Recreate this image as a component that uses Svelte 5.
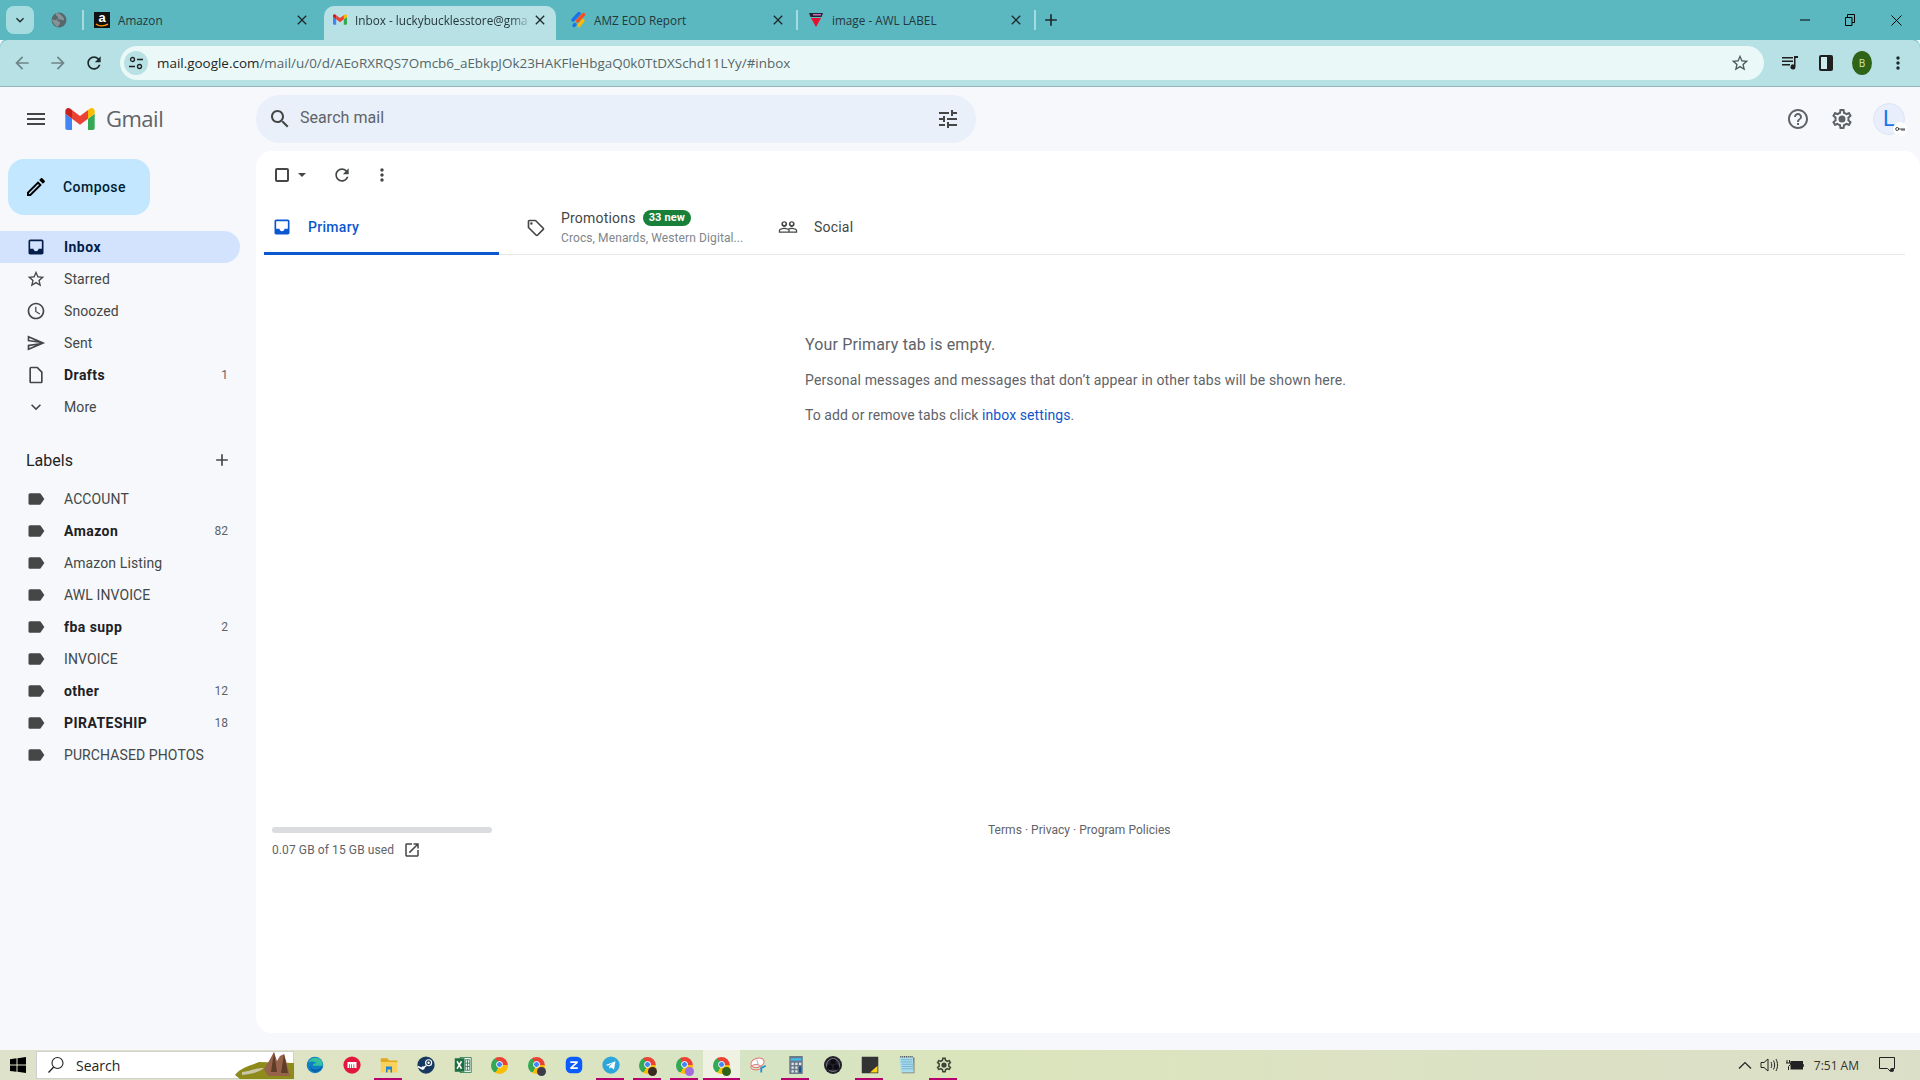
<script>
  const P = {
    inbox: 'M19 3H5c-1.1 0-2 .9-2 2v14c0 1.1.9 2 2 2h14c1.1 0 2-.9 2-2V5c0-1.1-.9-2-2-2zM5 5h14v9h-4c0 1.66-1.34 3-3 3s-3-1.34-3-3H5z',
    star: 'M22 9.24l-7.19-.62L12 2 9.19 8.63 2 9.24l5.46 4.73L5.82 21 12 17.27 18.18 21l-1.63-7.03L22 9.24zM12 15.4l-3.76 2.27 1-4.28-3.32-2.88 4.38-.38L12 6.1l1.71 4.04 4.38.38-3.32 2.88 1 4.28L12 15.4z',
    clock: 'M11.99 2C6.47 2 2 6.48 2 12s4.47 10 9.99 10C17.52 22 22 17.52 22 12S17.52 2 11.99 2zM12 20c-4.42 0-8-3.58-8-8s3.58-8 8-8 8 3.58 8 8-3.58 8-8 8zm.5-13H11v6l5.25 3.15.75-1.23-4.5-2.67z',
    send: 'M4.01 6.03l7.51 3.22-7.52-1 .01-2.22m7.5 8.72L4 17.97v-2.22l7.51-1M2.01 3L2 10l15 2-15 2 .01 7L23 12 2.01 3z',
    draft: 'M14 2H6c-1.1 0-2 .9-2 2v16c0 1.1.9 2 2 2h12c1.1 0 2-.9 2-2V8l-6-6zM6 20V4h7l5 5v11H6z',
    chevron: 'M7.41 8.59L12 13.17l4.59-4.58L18 10l-6 6-6-6z',
    label: 'M17.63 5.84C17.27 5.33 16.67 5 16 5L5 5.01C3.9 5.01 3 5.9 3 7v10c0 1.1.9 1.99 2 1.99L16 19c.67 0 1.27-.33 1.63-.84L22 12l-4.37-6.16z',
    pencil: 'M3 17.25V21h3.75L17.81 9.94l-3.75-3.75L3 17.25zM5.92 19H5v-.92l9.06-9.06.92.92L5.92 19zM20.71 5.63l-2.34-2.34c-.2-.2-.45-.29-.71-.29s-.51.1-.7.29l-1.83 1.83 3.75 3.75 1.83-1.83c.39-.39.39-1.02 0-1.41z',
    search: 'M15.5 14h-.79l-.28-.27C15.41 12.59 16 11.11 16 9.5 16 5.91 13.09 3 9.5 3S3 5.91 3 9.5 5.91 16 9.5 16c1.61 0 3.09-.59 4.23-1.57l.27.28v.79l5 4.99L20.49 19l-4.99-5zm-6 0C7.01 14 5 11.99 5 9.5S7.01 5 9.5 5 14 7.01 14 9.5 11.99 14 9.5 14z',
    tune: 'M3 17v2h6v-2H3zM3 5v2h10V5H3zm10 16v-2h8v-2h-8v-2h-2v6h2zM7 9v2H3v2h4v2h2V9H7zm14 4v-2H11v2h10zm-6-4h2V7h4V5h-4V3h-2v6z',
    help: 'M11 18h2v-2h-2v2zm1-16C6.48 2 2 6.48 2 12s4.48 10 10 10 10-4.48 10-10S17.52 2 12 2zm0 18c-4.41 0-8-3.59-8-8s3.59-8 8-8 8 3.59 8 8-3.59 8-8 8zm0-14c-2.21 0-4 1.79-4 4h2c0-1.1.9-2 2-2s2 .9 2 2c0 2-3 1.75-3 5h2c0-2.25 3-2.5 3-5 0-2.21-1.79-4-4-4z',
    gear: 'M19.43 12.98c.04-.32.07-.64.07-.98 0-.34-.03-.66-.07-.98l2.11-1.65c.19-.15.24-.42.12-.64l-2-3.46c-.09-.16-.26-.25-.44-.25-.06 0-.12.01-.17.03l-2.49 1c-.52-.4-1.08-.73-1.69-.98l-.38-2.65C14.46 2.18 14.25 2 14 2h-4c-.25 0-.46.18-.49.42l-.38 2.65c-.61.25-1.17.59-1.69.98l-2.49-1c-.06-.02-.12-.03-.18-.03-.17 0-.34.09-.43.25l-2 3.46c-.13.22-.07.49.12.64l2.11 1.65c-.04.32-.07.65-.07.98 0 .33.03.66.07.98l-2.11 1.65c-.19.15-.24.42-.12.64l2 3.46c.09.16.26.25.44.25.06 0 .12-.01.17-.03l2.49-1c.52.4 1.08.73 1.69.98l.38 2.65c.03.24.24.42.49.42h4c.25 0 .46-.18.49-.42l.38-2.65c.61-.25 1.17-.59 1.69-.98l2.49 1c.06.02.12.03.18.03.17 0 .34-.09.43-.25l2-3.46c.12-.22.07-.49-.12-.64l-2.11-1.65zm-1.98-1.71c.04.31.05.52.05.73 0 .21-.02.43-.05.73l-.14 1.13.89.7 1.08.84-.7 1.21-1.27-.51-1.04-.42-.9.68c-.43.32-.84.56-1.25.73l-1.06.43-.16 1.13-.2 1.35h-1.4l-.19-1.35-.16-1.13-1.06-.43c-.43-.18-.83-.41-1.23-.71l-.91-.7-1.06.43-1.27.51-.7-1.21 1.08-.84.89-.7-.14-1.13c-.03-.31-.05-.54-.05-.74s.02-.43.05-.73l.14-1.13-.89-.7-1.08-.84.7-1.21 1.27.51 1.04.42.9-.68c.43-.32.84-.56 1.25-.73l1.06-.43.16-1.13.2-1.35h1.39l.19 1.35.16 1.13 1.06.43c.43.18.83.41 1.23.71l.91.7 1.06-.43 1.27-.51.7 1.21-1.07.85-.89.7.14 1.13zM12 8.500a3.500 3.500 0 1 0 0 7 3.500 3.500 0 1 0 0-7z',
    refresh: 'M17.65 6.35C16.2 4.9 14.21 4 12 4c-4.42 0-7.99 3.58-7.99 8s3.57 8 7.99 8c3.73 0 6.84-2.55 7.73-6h-2.08c-.82 2.33-3.04 4-5.65 4-3.31 0-6-2.69-6-6s2.69-6 6-6c1.66 0 3.14.69 4.22 1.78L13 11h7V4l-2.35 2.35z',
    dots: 'M12 8c1.1 0 2-.9 2-2s-.9-2-2-2-2 .9-2 2 .9 2 2 2zm0 2c-1.1 0-2 .9-2 2s.9 2 2 2 2-.9 2-2-.9-2-2-2zm0 6c-1.1 0-2 .9-2 2s.9 2 2 2 2-.9 2-2-.9-2-2-2z',
    tag: 'M21.41 11.58l-9-9C12.05 2.22 11.55 2 11 2H4c-1.1 0-2 .9-2 2v7c0 .55.22 1.05.59 1.42l9 9c.36.36.86.58 1.41.58s1.05-.22 1.41-.59l7-7c.37-.36.59-.86.59-1.41s-.23-1.06-.59-1.42zM13 20.01L4 11V4h7v-.01l9 9-7 7.02zM6.5 5A1.5 1.5 0 1 0 6.5 8 1.5 1.5 0 1 0 6.5 5z',
    people: 'M16.5 13c-1.2 0-3.07.34-4.5 1-1.43-.67-3.3-1-4.5-1C5.33 13 1 14.08 1 16.25V19h22v-2.75c0-2.17-4.33-3.25-6.5-3.25zm-4 4.5h-10v-1.25c0-.54 2.56-1.75 5-1.75s5 1.21 5 1.75v1.25zm9 0H14v-1.25c0-.46-.2-.86-.52-1.22.88-.3 1.96-.53 3.02-.53 2.44 0 5 1.21 5 1.75v1.25zM7.5 12c1.93 0 3.5-1.57 3.5-3.5S9.43 5 7.5 5 4 6.57 4 8.5 5.57 12 7.5 12zm0-5.5c.83 0 1.5.67 1.5 1.5s-.67 1.5-1.5 1.5S6 8.83 6 8s.67-1.5 1.5-1.5zm9 5.5c1.93 0 3.5-1.57 3.5-3.5S18.43 5 16.5 5 13 6.57 13 8.5s1.57 3.5 3.5 3.5zm0-5.5c.83 0 1.5.67 1.5 1.5s-.67 1.5-1.5 1.5S15 8.83 15 8s.67-1.5 1.5-1.5z',
    open: 'M19 19H5V5h7V3H5c-1.11 0-2 .9-2 2v14c0 1.1.89 2 2 2h14c1.1 0 2-.9 2-2v-7h-2v7zM14 3v2h3.59l-9.83 9.83 1.41 1.41L19 6.41V10h2V3h-7z',
    back: 'M20 11H7.83l5.59-5.59L12 4l-8 8 8 8 1.41-1.41L7.83 13H20v-2z',
    forward: 'M12 4l-1.41 1.41L16.17 11H4v2h12.17l-5.58 5.59L12 20l8-8z',
    plus: 'M19 13h-6v6h-2v-6H5v-2h6V5h2v6h6v2z',
    menu: 'M3 18h18v-2H3v2zm0-5h18v-2H3v2zm0-7v2h18V6H3z',
    close: 'M19 6.41L17.59 5 12 10.59 6.41 5 5 6.41 10.59 12 5 17.59 6.41 19 12 13.41 17.59 19 19 17.59 13.41 12z'
  };

  const nav = [
    { name: 'Inbox', icon: P.inbox, active: true },
    { name: 'Starred', icon: P.star },
    { name: 'Snoozed', icon: P.clock },
    { name: 'Sent', icon: P.send },
    { name: 'Drafts', icon: P.draft, count: 1, bold: true },
    { name: 'More', icon: P.chevron }
  ];

  const labels = [
    { name: 'ACCOUNT' },
    { name: 'Amazon', count: 82, bold: true },
    { name: 'Amazon Listing' },
    { name: 'AWL INVOICE' },
    { name: 'fba supp', count: 2, bold: true },
    { name: 'INVOICE' },
    { name: 'other', count: 12, bold: true },
    { name: 'PIRATESHIP', count: 18, bold: true },
    { name: 'PURCHASED PHOTOS' }
  ];

  const tabs = [
    { title: 'Amazon', fav: 'amazon' },
    { title: 'Inbox - luckybucklesstore@gma', fav: 'gmail', active: true },
    { title: 'AMZ EOD Report', fav: 'amz' },
    { title: 'image - AWL LABEL', fav: 'awl' }
  ];

  // taskbar order, run = underlined
  const apps = [
    { id: 'edge' }, { id: 'red' }, { id: 'folder', run: true }, { id: 'steam' }, { id: 'excel' },
    { id: 'chrome' }, { id: 'chrome', badge: 'b1' }, { id: 'zoom' },
    { id: 'telegram', run: true }, { id: 'chrome', badge: 'b2', run: true },
    { id: 'chrome', badge: 'b3', run: true }, { id: 'chrome', badge: 'b4', run: true, active: true },
    { id: 'snip' }, { id: 'calc', run: true }, { id: 'obs' }, { id: 'sticky', run: true },
    { id: 'notepad' }, { id: 'gear', run: true }
  ];
</script>

{#snippet icon(d, size, cls = '')}
  <svg class="ic {cls}" width={size} height={size} viewBox="0 0 24 24"><path d={d} fill-rule="evenodd" /></svg>
{/snippet}

{#snippet gmailLogo(w, h)}
  <svg width={w} height={h} viewBox="52 42 88 66">
    <path fill="#4285f4" d="M58 108h14V74L52 59v43c0 3.32 2.69 6 6 6" />
    <path fill="#34a853" d="M120 108h14c3.32 0 6-2.69 6-6V59l-20 15" />
    <path fill="#fbbc04" d="M120 48v26l20-15v-8c0-7.42-8.47-11.65-14.4-7.2" />
    <path fill="#ea4335" d="M72 74V48l24 18 24-18v26L96 92" />
    <path fill="#c5221f" d="M52 51v8l20 15V48l-5.6-4.2c-5.94-4.45-14.4-.22-14.4 7.2" />
  </svg>
{/snippet}

{#snippet favicon(kind)}
  {#if kind === 'amazon'}
    <span class="fav-amazon">a<svg width="14" height="5" viewBox="0 0 14 5"><path d="M1 1c3 2.4 8 2.4 12 .2" fill="none" stroke="#f90" stroke-width="1.5" /></svg></span>
  {:else if kind === 'gmail'}
    <span class="fav">{@render gmailLogo(14, 11)}</span>
  {:else if kind === 'amz'}
    <svg class="fav" width="16" height="16" viewBox="0 0 16 16">
      <path d="M9 1.5L3 8" stroke="#1a73e8" stroke-width="3.4" stroke-linecap="round" />
      <path d="M13.5 2.5L7.5 9" stroke="#f4511e" stroke-width="3.4" stroke-linecap="round" />
      <path d="M13 8.5l-4 5" stroke="#fbbc04" stroke-width="3.4" stroke-linecap="round" />
      <path d="M5 12.5l-1 1" stroke="#1a73e8" stroke-width="3.4" stroke-linecap="round" />
    </svg>
  {:else}
    <svg class="fav" width="16" height="16" viewBox="0 0 16 16">
      <path d="M1 1h14l-1.5 4h-11z" fill="#2a2130" />
      <path d="M5 2h8v1.5H5z" fill="#c46fc4" />
      <path d="M3 6h10l-5 9z" fill="#e8112d" />
    </svg>
  {/if}
{/snippet}

{#snippet app(a)}
  {#if a.id === 'chrome'}
    <span class="chrome"><span class="chrome-dot"></span>{#if a.badge}<span class="badge-dot {a.badge}"></span>{/if}</span>
  {:else if a.id === 'edge'}
    <svg width="24" height="24" viewBox="0 0 24 24">
      <circle cx="12" cy="12" r="11" fill="#0f7fc4" />
      <path d="M3 9c2-6 9-8 14-6 4 2 6 6 5 10H9c0-3 3-4 5-3-1-3-7-4-11-1z" fill="#35c1a0" />
      <path d="M22 13c-1 6-7 9-11 8-4-1-6-5-5-8 0 3 4 6 8 5 3 0 6-2 8-5z" fill="#0a5fa8" />
    </svg>
  {:else if a.id === 'red'}
    <svg width="24" height="24" viewBox="0 0 24 24">
      <circle cx="12" cy="12" r="11.500" fill="#e3173e" />
      <path d="M6 8h12v8h-3v-5h-1v5h-2v-5h-1v5H9v-5H8v5H6z" fill="#fff" />
    </svg>
  {:else if a.id === 'folder'}
    <svg width="24" height="24" viewBox="0 0 24 24">
      <path d="M1 3h9l2 3h11v3H1z" fill="#e2a91f" />
      <path d="M1 8h22v14H1z" fill="#f9d25e" />
      <path d="M8 14h8v8h-2v-4h-4v4H8z" fill="#1f86d6" />
    </svg>
  {:else if a.id === 'steam'}
    <svg width="24" height="24" viewBox="0 0 24 24">
      <circle cx="12" cy="12" r="11.500" fill="#16395f" />
      <circle cx="15.5" cy="9" r="4" fill="none" stroke="#fff" stroke-width="1.6" />
      <circle cx="15.5" cy="9" r="1.6" fill="#fff" />
      <path d="M1 14l6 3 5-4" fill="none" stroke="#fff" stroke-width="2" />
      <circle cx="8" cy="16" r="2.2" fill="#fff" />
    </svg>
  {:else if a.id === 'excel'}
    <svg width="24" height="24" viewBox="0 0 24 24">
      <path d="M8 2h15v20H8z" fill="#e9f3ec" stroke="#1d6f42" />
      <path d="M15 5h6v14h-6z" fill="none" stroke="#1d6f42" />
      <path d="M15 9.5h6M15 14h6M18 5v14" stroke="#1d6f42" />
      <path d="M1 3h13v18H1z" fill="#1d6f42" />
      <path d="M4 7l6 10M10 7l-6 10" stroke="#fff" stroke-width="2" />
    </svg>
  {:else if a.id === 'zoom'}
    <svg width="24" height="24" viewBox="0 0 24 24">
      <rect x="1" y="1" width="22" height="22" rx="7" fill="#0b5cff" />
      <path d="M7 7h10v2.2L10.5 15H17v2.4H7v-2.2L13.5 9.4H7z" fill="#fff" />
    </svg>
  {:else if a.id === 'telegram'}
    <svg width="24" height="24" viewBox="0 0 24 24">
      <circle cx="12" cy="12" r="11.500" fill="#2ea6da" />
      <path d="M5 12l13-5-2 11-4-3-2 2-.5-3.500 5.500-5-7 4.500z" fill="#fff" />
    </svg>
  {:else if a.id === 'snip'}
    <svg width="24" height="24" viewBox="0 0 24 24">
      <ellipse cx="10" cy="9" rx="9" ry="6" transform="rotate(-18 10 9)" fill="#fff" stroke="#e5726f" stroke-width="1.3" />
      <ellipse cx="8" cy="15" rx="7" ry="3.5" fill="none" stroke="#e5726f" stroke-width="1.3" />
      <path d="M9 5l2 6M6 12l5-1" stroke="#999" />
      <path d="M15 22v-6l6-3" fill="none" stroke="#1a93d8" stroke-width="2.4" />
    </svg>
  {:else if a.id === 'calc'}
    <svg width="24" height="24" viewBox="0 0 24 24">
      <path d="M3 0h18v24H3z" fill="#6b7a8a" />
      <path d="M5 3h14v3H5z" fill="#3ec1f0" />
      <path d="M6 9h3v3H6zM11 9h3v3h-3zM16 9h3v3h-3zM6 14h3v3H6zM11 14h3v3h-3zM6 19h3v3H6zM11 19h3v3h-3z" fill="#e3e7ec" />
      <path d="M16 14h3v8h-3z" fill="#12558f" />
    </svg>
  {:else if a.id === 'obs'}
    <svg width="24" height="24" viewBox="0 0 24 24">
      <circle cx="12" cy="12" r="12" fill="#23212a" />
      <circle cx="12" cy="12" r="8.500" fill="none" stroke="#8b8994" stroke-width="1.200" />
      <circle cx="12" cy="7.500" r="3.600" fill="#0d0c12" />
      <circle cx="7.500" cy="15" r="3.600" fill="#0d0c12" />
      <circle cx="16.500" cy="15" r="3.600" fill="#0d0c12" />
    </svg>
  {:else if a.id === 'sticky'}
    <svg width="24" height="24" viewBox="0 0 24 24">
      <path d="M1 1h22v22H1z" fill="#333" />
      <path d="M22 13v9H12z" fill="#fcd116" />
    </svg>
  {:else if a.id === 'notepad'}
    <svg width="24" height="24" viewBox="0 0 24 24">
      <path d="M5 2h17v21H5z" fill="#7e7a6c" />
      <path d="M2 1h18l1 21H4z" fill="#a9dcef" />
      <path d="M4 5h15M4 8h15M5 11h15M5 14h15M5 17h15" stroke="#6aa7c0" />
      <path d="M3 1h17" stroke="#555" stroke-width="2" stroke-dasharray="1.500 1" />
    </svg>
  {:else}
    {@render icon(P.gear, 24, 'tb-gear')}
  {/if}
{/snippet}

<div class="screen">
  <div class="tabstrip">
    <span class="tabsearch">{@render icon(P.chevron, 16, 'dark')}</span>
    <span class="pinned">
      <svg width="18" height="18" viewBox="0 0 18 18">
        <circle cx="9" cy="9" r="7.500" fill="#58676c" />
        <path d="M6 2c-1 2 1 3 2 4s-1 3-3 3-3-1-3-1c0 3 3 7 6 8 0-2 2-2 2-4s-3-2-3-3 3-1 5 0 2 0 2-1-3-6-8-6z" fill="#859398" />
      </svg>
    </span>
    {#each tabs as t, i}
      <div class="tab" class:active={t.active} class:sep={i !== 2 && !t.active}>
        {@render favicon(t.fav)}
        <span class="tab-title">{t.title}</span>
        {@render icon(P.close, 16, 'dark')}
      </div>
    {/each}
    <span class="newtab">{@render icon(P.plus, 20, 'dark')}</span>
    <div class="winctl">
      <svg width="10" height="10" viewBox="0 0 10 10"><path d="M0 5h10" stroke="#000" /></svg>
      <svg width="10" height="12" viewBox="0 0 10 12"><path d="M.5 3.500h6.500v8H.5zM2.500 3.500V.5h7v8H7" fill="none" stroke="#000" /></svg>
      <svg width="11" height="11" viewBox="0 0 11 11"><path d="M.5.5l10 10M10.500.5l-10 10" stroke="#000" /></svg>
    </div>
  </div>

  <div class="toolbar">
    <span class="tbtn">{@render icon(P.back, 20, 'muted')}</span>
    <span class="tbtn">{@render icon(P.forward, 20, 'muted')}</span>
    <span class="tbtn">{@render icon(P.refresh, 20, 'dark')}</span>
    <div class="omnibox">
      <span class="siteinfo">
        <svg width="16" height="16" viewBox="0 0 16 16">
          <circle cx="4.500" cy="4.500" r="2" fill="none" stroke="#1f1f1f" stroke-width="1.300" />
          <path d="M9 4.500h6M1 11.500h6" stroke="#1f1f1f" stroke-width="1.300" />
          <circle cx="11.500" cy="11.500" r="2" fill="none" stroke="#1f1f1f" stroke-width="1.300" />
        </svg>
      </span>
      <span class="url"><b>mail.google.com</b>/mail/u/0/d/AEoRXRQS7Omcb6_aEbkpJOk23HAKFleHbgaQ0k0TtDXSchd11LYy/#inbox</span>
      {@render icon(P.star, 20, 'greyed')}
    </div>
    <div class="tools">
      <svg width="20" height="20" viewBox="0 0 20 20"><path d="M2 4h11v1.500H2zM2 7.500h11V9H2zM2 11h8v1.500H2z" fill="#1f1f1f" /><path d="M14 3h4v2h-2.500v9a2.500 2.500 0 1 1-1.500-2.300z" fill="#1f1f1f" /></svg>
      <svg width="20" height="20" viewBox="0 0 20 20"><rect x="3" y="2" width="14" height="16" rx="2" fill="#1f1f1f" /><rect x="5" y="4" width="6" height="12" fill="#cfeaed" /></svg>
      <span class="browser-avatar">B</span>
      {@render icon(P.dots, 20, 'dark')}
    </div>
  </div>

  <div class="gmail">
    <header class="gm-head">
      <div class="brand">
        {@render icon(P.menu, 24, 'grey')}
        <span class="logo">{@render gmailLogo(30, 22)}</span>
        <span class="wordmark">Gmail</span>
      </div>
      <div class="searchbar">
        {@render icon(P.search, 24, 'grey')}
        <span class="ph">Search mail</span>
        {@render icon(P.tune, 24, 'grey')}
      </div>
      <div class="head-right">
        {@render icon(P.help, 24, 'soft')}
        {@render icon(P.gear, 24, 'soft')}
        <span class="avatar">L<span class="key">
          <svg width="10" height="6" viewBox="0 0 10 6"><circle cx="2.200" cy="3" r="1.500" fill="none" stroke="#444" /><path d="M3.700 3H10M7 3v2M9 3v2" stroke="#444" /></svg>
        </span></span>
      </div>
    </header>

    <div class="gm-body">
      <aside class="side">
        <div class="compose">{@render icon(P.pencil, 24, 'black')}<span>Compose</span></div>
        <nav class="nav">
          {#each nav as n}
            <div class="row" class:active={n.active} class:bold={n.bold}>
              {@render icon(n.icon, 20, 'grey')}
              <span class="name">{n.name}</span>
              {#if n.count}<span class="count">{n.count}</span>{/if}
            </div>
          {/each}
        </nav>
        <div class="labels-head"><span>Labels</span>{@render icon(P.plus, 20, 'grey')}</div>
        <div>
          {#each labels as l}
            <div class="row" class:bold={l.bold}>
              {@render icon(P.label, 20, 'grey')}
              <span class="name">{l.name}</span>
              {#if l.count}<span class="count">{l.count}</span>{/if}
            </div>
          {/each}
        </div>
      </aside>

      <main class="card">
        <div class="mail-tools">
          <span class="check"></span>
          <span class="caret"></span>
          <span class="refresh">{@render icon(P.refresh, 20, 'grey')}</span>
          <span class="more">{@render icon(P.dots, 20, 'grey')}</span>
        </div>
        <div class="mail-tabs">
          <div class="mtab primary">{@render icon(P.inbox, 20, 'blue')}<span>Primary</span></div>
          <div class="mtab promo">
            {@render icon(P.tag, 20, 'grey')}
            <div class="promo-text">
              <div class="promo-top"><span>Promotions</span><span class="new">33 new</span></div>
              <div class="promo-sub">Crocs, Menards, Western Digital...</div>
            </div>
          </div>
          <div class="mtab social">{@render icon(P.people, 20, 'grey')}<span>Social</span></div>
        </div>
        <div class="empty">
          <h2>Your Primary tab is empty.</h2>
          <p>Personal messages and messages that don’t appear in other tabs will be shown here.</p>
          <p class="tight">To add or remove tabs click <a href="#settings">inbox settings</a>.</p>
        </div>
        <div class="foot">
          <div class="storage">
            <div class="bar"></div>
            <div class="used"><span>0.07 GB of 15 GB used</span>{@render icon(P.open, 18, 'grey')}</div>
          </div>
          <div class="terms">Terms · Privacy · Program Policies</div>
        </div>
      </main>
    </div>
  </div>

  <div class="taskbar">
    <svg class="win" width="16" height="16" viewBox="0 0 16 16"><path d="M0 2.200l6.500-.9v6.300H0zM7.500 1.200L16 0v7.600H7.500zM0 8.500h6.500v6.300L0 13.900zM7.500 8.500H16V16l-8.500-1.200z" fill="#000" /></svg>
    <div class="tb-search">
      <svg width="18" height="18" viewBox="0 0 18 18"><circle cx="10.500" cy="7" r="5.500" fill="none" stroke="#222" stroke-width="1.100" /><path d="M6.700 11L1.500 16.500" stroke="#222" stroke-width="1.300" /></svg>
      <span>Search</span>
      <svg class="hill" width="60" height="28" viewBox="0 0 60 28">
        <path d="M1 24c5-7 14-9 24-13l35 1v16H6z" fill="#8f8a1c" />
        <path d="M8 21c8-1 14-4 22-4-6 5-14 6-22 7z" fill="#c9c7a8" />
        <path d="M30 18l5-8 5-9 3 9 3-5 4-2 3 10 3 12H34z" fill="#96634a" />
        <path d="M40 1l3 20h-6zM50 3l4 19h-7z" fill="#5d3c28" />
      </svg>
    </div>
    <div class="apps">
      {#each apps as a}
        <div class="app" class:run={a.run} class:active={a.active}>{@render app(a)}</div>
      {/each}
    </div>
    <div class="tray">
      <svg width="14" height="8" viewBox="0 0 14 8"><path d="M1 7.500l6-6 6 6" fill="none" stroke="#222" stroke-width="1.200" /></svg>
      <svg width="18" height="16" viewBox="0 0 18 16"><path d="M1 5.500h3l4-3.500v12l-4-3.500H1zM11 5c1 2 1 4 0 6M13.500 3.500c1.500 3 1.500 6 0 9M16 2c2 4 2 8 0 12" fill="none" stroke="#222" /></svg>
      <svg width="18" height="12" viewBox="0 0 18 12"><rect x="5" y="2.500" width="11.500" height="7.500" fill="#222" stroke="#222" /><path d="M17 5v3" stroke="#222" stroke-width="1.500" /><path d="M1 1v3M3.500 1v3M0 4h4.500v1.500L2.500 7.500V11" fill="none" stroke="#222" /></svg>
      <span class="clock">7:51 AM</span>
      <svg class="notif" width="16" height="16" viewBox="0 0 16 16"><path d="M.5.500h15v11h-2l-2 3-3-3H.5z" fill="none" stroke="#222" /><circle cx="13" cy="13" r="2" fill="#222" /></svg>
    </div>
  </div>
</div>

<style>
  :global(body) {
    margin: 0;
    background: #f6f8fc;
  }

  .screen {
    width: 1920px;
    height: 1080px;
    display: flex;
    flex-direction: column;
    overflow: hidden;
    font-family: Roboto, "Liberation Sans", sans-serif;
  }

  .ic { fill: currentColor; flex: none; display: block; }
  :global(.ic.dark) { color: #1f2a2c; }
  :global(.ic.muted) { color: #6d8589; }
  :global(.ic.greyed) { color: #4f5a5c; }
  :global(.ic.grey) { color: #444746; }
  :global(.ic.soft) { color: #5f6368; }
  :global(.ic.black) { color: #000; }
  :global(.ic.blue) { color: #0b57d0; }
  :global(.ic.tb-gear) { color: #3f4536; }

  /* browser tabs */
  .tabstrip {
    height: 40px;
    flex: none;
    background: #5bb8c1;
    display: flex;
    align-items: flex-end;
    font-family: "Open Sans", "Liberation Sans", sans-serif;
    font-size: 11.750px;
    color: #25373a;
  }

  .tabsearch {
    width: 28px;
    height: 28px;
    margin: 0 0 6px 6px;
    border-radius: 8px;
    background: #a6dbe0;
    display: flex;
    align-items: center;
    justify-content: center;
  }

  .pinned {
    width: 48px;
    height: 40px;
    box-sizing: border-box;
    padding-left: 2px;
    display: flex;
    align-items: center;
    justify-content: center;
    flex: none;
  }

  .tab {
    width: 238px;
    height: 34px;
    box-sizing: border-box;
    padding: 0 10px 6px 12px;
    display: flex;
    align-items: center;
    position: relative;
    flex: none;
  }

  .tab.sep::before {
    content: '';
    position: absolute;
    left: 0;
    top: 4px;
    height: 20px;
    width: 2px;
    background: #a6dbe0;
  }

  .tab.active {
    width: 232px;
    margin: 0 2px 0 4px;
    padding-left: 9px;
    padding-right: 8px;
    background: #b8e1e5;
    border-radius: 10px 10px 0 0;
  }

  .tab-title {
    flex: 1;
    min-width: 0;
    margin-left: 8px;
    white-space: nowrap;
    overflow: hidden;
  }

  .tab.active .tab-title {
    -webkit-mask-image: linear-gradient(90deg, #000 88%, transparent);
    mask-image: linear-gradient(90deg, #000 88%, transparent);
  }

  .fav { flex: none; display: block; }
  .fav-amazon {
    width: 16px;
    height: 16px;
    flex: none;
    background: #111;
    color: #fff;
    position: relative;
    text-align: center;
    font: bold 13px/12px "Liberation Sans", sans-serif;
  }
  .fav-amazon svg { position: absolute; left: 1px; bottom: 0; }

  .newtab {
    margin: 0 0 10px 0;
    border-left: 2px solid #a6dbe0;
    padding-left: 5px;
    height: 20px;
    display: flex;
    align-items: center;
  }

  .winctl {
    margin-left: auto;
    width: 138px;
    height: 40px;
    display: flex;
    align-items: center;
    justify-content: space-around;
    flex: none;
  }

  /* browser toolbar */
  .toolbar {
    height: 47px;
    flex: none;
    box-sizing: border-box;
    background: #b8e1e5;
    border-bottom: 1px solid #93b5bb;
    border-radius: 8px 8px 0 0;
    padding: 6px 0 6px 4px;
    display: flex;
    align-items: center;
    box-shadow: 0 -1px 0 #5bb8c1;
  }

  .tbtn {
    width: 36px;
    display: flex;
    justify-content: center;
    flex: none;
  }

  .omnibox {
    width: 1644px;
    margin-left: 8px;
    height: 34px;
    flex: none;
    border-radius: 17px;
    background: #eaf8f7;
    display: flex;
    align-items: center;
    padding: 0 14px 0 4px;
    box-sizing: border-box;
  }

  .siteinfo {
    width: 24px;
    height: 24px;
    border-radius: 50%;
    background: #b8e1e5;
    display: flex;
    align-items: center;
    justify-content: center;
    flex: none;
  }

  .url {
    flex: 1;
    margin-left: 9px;
    font-size: 13.450px;
    color: #56666a;
    white-space: nowrap;
    font-family: "Open Sans", "Liberation Sans", sans-serif;
  }

  .url b { font-weight: 400; color: #1b2628; }

  .tools {
    display: flex;
    align-items: center;
    gap: 16px;
    margin-left: 16px;
  }

  .browser-avatar {
    width: 20px;
    height: 24px;
    border-radius: 50%;
    background: #2f6318;
    color: #cfe8b8;
    font: 10px/24px "Open Sans", sans-serif;
    text-align: center;
  }

  /* gmail */
  .gmail {
    flex: 1;
    min-height: 0;
    display: flex;
    flex-direction: column;
    background: #f6f8fc;
  }

  .gm-head {
    height: 64px;
    flex: none;
    display: flex;
    align-items: center;
  }

  .brand {
    width: 256px;
    flex: none;
    box-sizing: border-box;
    padding-left: 24px;
    display: flex;
    align-items: center;
  }

  .logo { margin-left: 17px; display: flex; }

  .wordmark {
    margin: 0 0 2px 11px;
    font-size: 22px;
    color: #5f6368;
    font-family: "Open Sans", sans-serif;
    letter-spacing: -0.5px;
  }

  .searchbar {
    width: 720px;
    height: 48px;
    border-radius: 24px;
    background: #e9f0fa;
    display: flex;
    align-items: center;
    padding: 0 16px 0 12px;
    box-sizing: border-box;
    flex: none;
  }

  .ph {
    flex: 1;
    margin: 0 0 4px 8px;
    font-size: 16px;
    color: #5f6368;
    letter-spacing: .05px;
  }

  .head-right {
    margin-left: auto;
    display: flex;
    align-items: center;
    padding-right: 15px;
    gap: 20px;
  }

  .avatar {
    width: 32px;
    height: 32px;
    margin-left: -1px;
    border-radius: 50%;
    background: #e8eefb;
    border: 1px solid #dde5f5;
    box-sizing: border-box;
    color: #1a73e8;
    font-size: 22px;
    line-height: 30px;
    text-align: center;
    position: relative;
  }

  .key {
    position: absolute;
    right: -3px;
    bottom: -2px;
    width: 14px;
    height: 14px;
    background: #fff;
    border-radius: 50%;
    display: flex;
    align-items: center;
    justify-content: center;
  }

  .gm-body {
    flex: 1;
    min-height: 0;
    display: flex;
  }

  .side {
    width: 256px;
    flex: none;
  }

  .compose {
    width: 142px;
    height: 56px;
    margin: 8px 0 0 8px;
    border-radius: 16px;
    background: #c2e7ff;
    display: flex;
    align-items: center;
    box-sizing: border-box;
    padding-left: 16px;
    font-size: 14px;
    font-weight: 500;
    color: #001d35;
    letter-spacing: .45px;
  }

  .compose span { margin-left: 15px; }

  .nav { margin-top: 16px; }

  .row {
    width: 240px;
    height: 32px;
    box-sizing: border-box;
    padding: 0 12px 0 26px;
    border-radius: 0 16px 16px 0;
    display: flex;
    align-items: center;
    font-size: 14px;
    color: #444746;
    letter-spacing: .1px;
  }

  .row .name { flex: 1; margin-left: 18px; }
  .row.bold { font-weight: 700; color: #202124; letter-spacing: .45px; }
  .row.active { background: #d3e3fd; font-weight: 700; color: #041e49; letter-spacing: .45px; }
  .row.active :global(.ic) { color: #041e49; }
  .count { font-size: 12px; font-weight: 400; color: #5f6368; letter-spacing: 0; }

  .labels-head {
    width: 240px;
    height: 32px;
    margin: 21px 0 7px;
    box-sizing: border-box;
    padding: 0 8px 0 26px;
    display: flex;
    justify-content: space-between;
    align-items: center;
    font-size: 16px;
    color: #1f1f1f;
  }

  .card {
    flex: 1;
    min-width: 0;
    height: 882px;
    background: #fff;
    border-radius: 16px 16px 0 16px;
  }

  .mail-tools {
    height: 49px;
    box-sizing: border-box;
    padding: 0 0 1px 19px;
    display: flex;
    align-items: center;
  }

  .check {
    width: 14px;
    height: 14px;
    box-sizing: border-box;
    border: 2px solid #444746;
    border-radius: 2px;
  }

  .caret {
    margin-left: 9px;
    border: 4px solid transparent;
    border-top: 4px solid #444746;
    border-bottom: 0;
  }

  .refresh { margin-left: 26px; }
  .more { margin-left: 20px; }

  .mail-tabs {
    height: 55px;
    margin: 0 15px 0 8px;
    border-bottom: 1px solid #e7e8ea;
    display: flex;
    box-sizing: border-box;
    font-size: 14px;
    color: #444746;
  }

  .mtab {
    display: flex;
    align-items: center;
    box-sizing: border-box;
  }

  .primary {
    width: 235px;
    padding: 2px 0 0 8px;
    gap: 16px;
    color: #0b57d0;
    font-weight: 500;
    letter-spacing: .3px;
    border-bottom: 3px solid #0b57d0;
    margin-bottom: -1px;
    height: 55px;
  }

  .promo {
    width: 254px;
    padding: 1px 0 0 27px;
    gap: 15px;
  }

  .promo-top {
    display: flex;
    align-items: center;
    gap: 7px;
    color: #444746;
    letter-spacing: .2px;
  }

  .new {
    background: #188038;
    color: #fff;
    font-size: 11px;
    font-weight: 700;
    height: 16px;
    line-height: 16px;
    padding: 0 6px;
    border-radius: 8px;
    letter-spacing: .15px;
  }

  .promo-sub {
    margin-top: 5px;
    font-size: 12px;
    color: #80868b;
    white-space: nowrap;
    letter-spacing: .1px;
  }

  .social {
    padding-left: 25px;
    gap: 16px;
    letter-spacing: .2px;
  }

  .empty {
    padding: 79px 0 0 549px;
    color: #5f6368;
    font-size: 14px;
    letter-spacing: .15px;
  }

  .empty h2 {
    margin: 0 0 -2px;
    font-size: 16px;
    font-weight: 400;
    line-height: 22px;
    letter-spacing: .15px;
  }

  .empty p {
    margin: 0;
    padding-top: 17px;
    line-height: 18px;
  }

  .empty p.tight { letter-spacing: .08px; }

  .empty a {
    color: #1155cc;
    text-decoration: none;
  }

  .foot {
    margin: 403px 0 0 16px;
    display: flex;
    font-size: 12px;
    color: #5f6368;
  }

  .storage { width: 220px; flex: none; }

  .bar {
    height: 6px;
    border-radius: 3px;
    background: #dadce0;
  }

  .used {
    display: flex;
    align-items: center;
    gap: 9px;
    margin-top: 8px;
    letter-spacing: .1px;
  }

  .terms {
    margin-left: 496px;
    line-height: 14px;
    margin-top: -4px;
    letter-spacing: .03px;
  }

  /* windows taskbar */
  .taskbar {
    height: 30px;
    flex: none;
    display: flex;
    align-items: center;
    background: linear-gradient(90deg, #dfe2cb 0%, #dde4c0 25%, #d6e4c4 40%, #dbe5bb 50%, #dce2c3 70%, #dbdfc8 100%);
    font-family: "Open Sans", "Liberation Sans", sans-serif;
  }

  .win { margin-left: 10px; flex: none; }

  .tb-search {
    width: 258px;
    height: 28px;
    margin-left: 10px;
    background: #fff;
    border: 1px solid #cfcfcf;
    box-sizing: border-box;
    display: flex;
    align-items: center;
    padding-left: 10px;
    position: relative;
    font-size: 14px;
    color: #222;
    flex: none;
  }

  .tb-search span { margin-left: 11px; }
  .hill { position: absolute; right: -1px; bottom: -1px; }

  .apps {
    display: flex;
    margin-left: 2px;
    height: 30px;
  }

  .app {
    width: 37px;
    height: 30px;
    display: flex;
    align-items: center;
    justify-content: center;
    position: relative;
    box-sizing: border-box;
  }

  .app svg { display: block; width: 18px; height: 18px; }

  .app.active { background: #eff2e2; }

  .app.run::after {
    content: '';
    position: absolute;
    left: 4px;
    right: 5px;
    bottom: 0;
    height: 2px;
    background: #b5006d;
  }

  .app.active::after { left: 0; right: 0; }

  .chrome {
    width: 17px;
    height: 17px;
    border-radius: 50%;
    background: conic-gradient(#ea4335 0 90deg, #fbbc04 90deg 210deg, #34a853 210deg 330deg, #ea4335 330deg);
    position: relative;
    display: block;
  }

  .chrome-dot {
    position: absolute;
    left: 4.500px;
    top: 4.500px;
    width: 5px;
    height: 5px;
    border: 1.500px solid #fff;
    border-radius: 50%;
    background: #4285f4;
  }

  .badge-dot {
    position: absolute;
    right: -1px;
    bottom: -2px;
    width: 9px;
    height: 9px;
    border-radius: 50%;
  }

  .b1 { background: #3d3a4a; }
  .b2 { background: #3b2a22; }
  .b3 { background: #a06ee0; }
  .b4 { background: #2f6318; }

  .tray {
    margin-left: auto;
    display: flex;
    align-items: center;
    color: #333;
    flex: none;
    padding-right: 25px;
  }

  .tray svg { margin-right: 8px; flex: none; }
  .clock { font-size: 12px; margin: 0 20px 0 2px; white-space: nowrap; }
  .tray .notif { margin-right: 0; }
</style>
